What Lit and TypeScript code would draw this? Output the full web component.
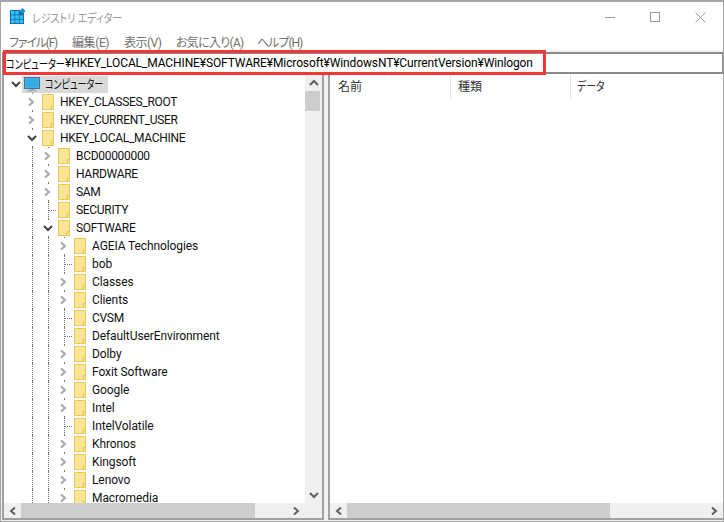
import { LitElement, html, css, svg } from "lit";
import { customElement } from "lit/decorators.js";

type Kind = "c" | "e" | "l";
const ROWS: [number, Kind, string][] = [
  [1, "c", "HKEY_CLASSES_ROOT"],
  [1, "c", "HKEY_CURRENT_USER"],
  [1, "e", "HKEY_LOCAL_MACHINE"],
  [2, "c", "BCD00000000"],
  [2, "c", "HARDWARE"],
  [2, "c", "SAM"],
  [2, "l", "SECURITY"],
  [2, "e", "SOFTWARE"],
  [3, "c", "AGEIA Technologies"],
  [3, "l", "bob"],
  [3, "c", "Classes"],
  [3, "c", "Clients"],
  [3, "l", "CVSM"],
  [3, "l", "DefaultUserEnvironment"],
  [3, "c", "Dolby"],
  [3, "c", "Foxit Software"],
  [3, "c", "Google"],
  [3, "c", "Intel"],
  [3, "l", "IntelVolatile"],
  [3, "c", "Khronos"],
  [3, "c", "Kingsoft"],
  [3, "c", "Lenovo"],
  [3, "c", "Macromedia"],
];

const MENU: [string, number, number][] = [
  ["ファイル(F)", 63, -1.2],
  ["編集(E)", 52, -0.4],
  ["表示(V)", 52, -0.5],
  ["お気に入り(A)", 81, -0.7],
  ["ヘルプ(H)", 60, -1],
];

const folder = html`<svg class="folder" width="12" height="18" viewBox="0 0 12 18">
  <rect x="0.5" y="1.5" width="11" height="15" fill="#fde594" stroke="#ecc95f"/>
  <path d="M9 16.5V12.5H11.5" fill="#f6d672" stroke="#ecc95f"/>
</svg>`;

const chev = (dir: "right" | "down" | "left" | "up", color: string) => {
  const d = {
    right: "M2 1.5 L6 5 L2 8.5",
    left: "M7 1.5 L3 5 L7 8.5",
    down: "M1 3 L5 7 L9 3",
    up: "M1 7 L5 3 L9 7",
  }[dir];
  return svg`<svg width="10" height="10" viewBox="0 0 10 10"><path d=${d} fill="none" stroke=${color} stroke-width="2"/></svg>`;
};

@customElement("app-root")
export class AppRoot extends LitElement {
  static styles = css`
    :host {
      display: block;
      width: 724px;
      height: 522px;
      font-family: Roboto, "Noto Sans CJK JP", sans-serif;
      font-size: 12px;
      color: #000;
    }
    .win {
      box-sizing: border-box;
      width: 724px;
      height: 522px;
      border: 1px solid #a6a6a6;
      border-top-width: 2px;
      background: #fff;
      display: flex;
      flex-direction: column;
      position: relative;
    }
    .title {
      height: 30px;
      display: flex;
      align-items: center;
      padding-left: 9px;
      flex: none;
    }
    .appicon { margin-top: -2px; }
    .kana {
      display: inline-block;
      white-space: nowrap;
      transform-origin: 0 50%;
      font-feature-settings: "palt";
    }
    .title .name {
      margin-left: 5px;
      color: #999;
      width: 90px;
      transform: scaleX(0.83);
    }
    .controls {
      margin-left: auto;
      display: flex;
      align-items: center;
      gap: 34px;
      padding-right: 17px;
    }
    .menu {
      height: 18px;
      display: flex;
      padding-left: 8px;
      flex: none;
      color: #6f6f6f;
      font-feature-settings: "palt";
      align-items: center;
    }
    .menu span { white-space: nowrap; }
    .sep { height: 2px; background: #f0f0f0; flex: none; }
    .addr {
      box-sizing: border-box;
      height: 22px;
      flex: none;
      border: 1px solid #8a8a8a;
      border-bottom-width: 2px;
      border-top-width: 2px;
      margin: 0 0 0 1px;
      padding-left: 3px;
      display: flex;
      align-items: center;
      white-space: nowrap;
      letter-spacing: -0.12px;
    }
    .addr .kana {
      width: 59px;
      letter-spacing: 0;
      transform: scaleX(0.76);
    }
    .red {
      position: absolute;
      left: 2px;
      top: 48px;
      width: 543px;
      height: 25px;
      box-sizing: border-box;
      border: 3px solid #f53636;
    }
    .panes {
      flex: 1;
      min-height: 0;
      display: grid;
      grid-template-columns: 322px 1fr;
      column-gap: 4px;
      background: #f0f0f0;
      padding: 0 0 1px 1px;
    }
    .pane {
      box-sizing: border-box;
      background: #fff;
      border-right: 2px solid #a0a0a0;
      border-bottom: 2px solid #a0a0a0;
      border-left: 2px solid #a0a0a0;
      display: grid;
      min-height: 0;
      overflow: hidden;
    }
    .left { grid-template-columns: 1fr 17px; grid-template-rows: 1fr 15px; }
    .right { grid-template-rows: 1fr 15px; border-right: none; }
    .tree { overflow: hidden; padding: 1px 0 0 4px; }
    .row {
      display: flex;
      height: 18px;
      align-items: stretch;
      white-space: nowrap;
    }
    .cell {
      width: 16px;
      flex: none;
      position: relative;
      display: flex;
      align-items: center;
      justify-content: center;
    }
    .v::before {
      content: "";
      position: absolute;
      left: 8px;
      top: 0;
      bottom: 0;
      border-left: 1px dotted #777;
    }
    .elbow::after {
      content: "";
      position: absolute;
      left: 9px;
      width: 7px;
      top: 9px;
      border-top: 1px dotted #777;
    }
    .cell svg { position: relative; background: #fff; padding: 3px 0; }
    .folder { flex: none; margin: 0 6px 0 2px; align-self: center; }
    .label { line-height: 18px; color: #111; letter-spacing: -0.1px; }
    .label.caps { letter-spacing: -0.3px; }
    .root .hl {
      display: flex;
      align-items: center;
      background: #d9d9d9;
      height: 17px;
      margin-top: 1px;
      margin-left: -2px;
      padding-left: 2px;
      width: 84px;
      flex: none;
    }
    .root .label { margin-left: 4px; width: 60px; transform: scaleX(0.75); letter-spacing: 0; }
    .vbar {
      background: #f0f0f0;
      display: flex;
      flex-direction: column;
      align-items: center;
    }
    .btn-v {
      height: 17px;
      flex: none;
      width: 100%;
      display: flex;
      align-items: center;
      justify-content: center;
    }
    .vthumb { height: 20px; width: 15px; background: #cdcdcd; align-self: flex-start; flex: none; }
    .grow { flex: 1; }
    .hbar {
      background: #f0f0f0;
      display: flex;
      align-items: stretch;
      height: 15px;
    }
    .btn-h {
      width: 17px;
      flex: none;
      display: flex;
      align-items: center;
      justify-content: center;
    }
    .hthumb { background: #cdcdcd; flex: none; }
    .corner { background: #f0f0f0; }
    .list { display: block; overflow: hidden; }
    .head { display: flex; height: 25px; align-items: stretch; }
    .col {
      box-sizing: border-box;
      border-right: 1px solid #e5e5e5;
      padding: 3px 0 0 8px;
      color: #333;
      flex: none;
      line-height: 20px;
    }
    .col.w1 { width: 121px; }
    .col.w2 { width: 120px; padding-left: 7px; }
    .col.w3 { width: 120px; padding-left: 6px; border-right: none; }
    .col .kana { transform: scaleX(0.82); }
    .tw { width: 234px; }
    .tw2 { width: 263px; }
  `;

  private row(level: number, kind: Kind, name: string) {
    const cells = [];
    for (let i = 0; i < level; i++) {
      cells.push(html`<div class="cell ${i > 0 ? "v" : ""}"></div>`);
    }
    const caps = name === name.toUpperCase();
    return html`<div class="row">
      ${cells}
      ${kind === "l"
        ? html`<div class="cell v elbow"></div>`
        : html`<div class="cell v">${kind === "c" ? chev("right", "#a6a6a6") : chev("down", "#404040")}</div>`}
      ${folder}<span class="label ${caps ? "caps" : ""}">${name}</span>
    </div>`;
  }

  render() {
    return html`<div class="win">
      <div class="title">
        <svg class="appicon" width="17" height="17" viewBox="0 0 17 17">
          <rect x="0" y="2" width="14" height="14" fill="#0f6fa8"/>
          <g fill="#35c0f5">
            <rect x="1" y="3" width="3.5" height="3.5"/><rect x="5.3" y="3" width="3.5" height="3.5"/>
            <rect x="1" y="7.3" width="3.5" height="3.5"/><rect x="5.3" y="7.3" width="3.5" height="3.5"/><rect x="9.6" y="7.3" width="3.5" height="3.5"/>
            <rect x="1" y="11.6" width="3.5" height="3.5"/><rect x="5.3" y="11.6" width="3.5" height="3.5"/><rect x="9.6" y="11.6" width="3.5" height="3.5"/>
          </g>
          <path d="M12.5 0 L15.5 3 L12.5 6 L9.5 3 Z" fill="#1f8fc9"/>
        </svg>
        <span class="name kana">レジストリ エディター</span>
        <div class="controls">
          <svg width="11" height="11" viewBox="0 0 11 11"><path d="M0 5.5H10" stroke="#999"/></svg>
          <svg width="11" height="11" viewBox="0 0 11 11"><rect x="0.5" y="0.5" width="9" height="9" fill="none" stroke="#999"/></svg>
          <svg width="11" height="11" viewBox="0 0 11 11"><path d="M0.5 0.5L10.5 10.5M10.5 0.5L0.5 10.5" stroke="#999"/></svg>
        </div>
      </div>
      <div class="menu">
        ${MENU.map(([t, w, s]) => html`<span style="width:${w}px;letter-spacing:${s}px">${t}</span>`)}
      </div>
      <div class="sep"></div>
      <div class="addr"><span class="kana">コンピューター</span>¥HKEY_LOCAL_MACHINE¥SOFTWARE¥Microsoft¥WindowsNT¥CurrentVersion¥Winlogon</div>
      <div class="panes">
        <div class="pane left">
          <div class="tree">
            <div class="row root">
              <div class="cell">${chev("down", "#404040")}</div>
              <div class="hl">
                <svg width="17" height="16" viewBox="0 0 17 16">
                  <rect x="0.5" y="0.5" width="15" height="11" fill="#3db5ef" stroke="#4a7391"/>
                  <rect x="2" y="2" width="12" height="8" fill="#3aa9e6"/>
                  <rect x="6" y="12" width="4" height="1" fill="#8aa0ae"/>
                  <rect x="3" y="13" width="10" height="1.5" fill="#9fb4c2"/>
                </svg>
                <span class="label kana">コンピューター</span>
              </div>
            </div>
            ${ROWS.map(([l, k, n]) => this.row(l, k, n))}
          </div>
          <div class="vbar">
            <div class="btn-v">${chev("up", "#606060")}</div>
            <div class="vthumb"></div>
            <div class="grow"></div>
            <div class="btn-v">${chev("down", "#606060")}</div>
          </div>
          <div class="hbar">
            <div class="btn-h">${chev("left", "#606060")}</div>
            <div class="hthumb tw"></div>
            <div class="grow"></div>
            <div class="btn-h">${chev("right", "#606060")}</div>
          </div>
          <div class="corner"></div>
        </div>
        <div class="pane right">
          <div class="list">
            <div class="head">
              <div class="col w1">名前</div>
              <div class="col w2">種類</div>
              <div class="col w3"><span class="kana">データ</span></div>
            </div>
          </div>
          <div class="hbar">
            <div class="btn-h">${chev("left", "#606060")}</div>
            <div class="hthumb tw2"></div>
            <div class="grow"></div>
            <div class="btn-h">${chev("right", "#606060")}</div>
          </div>
        </div>
      </div>
      <div class="red"></div>
    </div>`;
  }
}
